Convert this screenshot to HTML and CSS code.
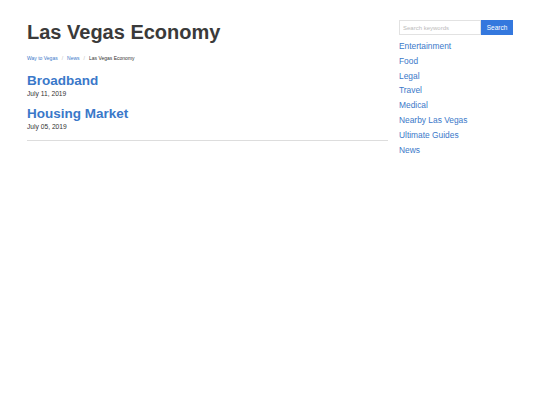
FILE: index.html
```html
<!DOCTYPE html>
<html>
<head>
<meta charset="utf-8">
<link rel="stylesheet" href="styles.css">
</head>
<body>
<div class="page">
  <main class="main">
    <h1 class="title">Las Vegas Economy</h1>
    <nav class="crumbs">
      <a href="#">Way to Vegas</a><span class="sep">/</span><a href="#">News</a><span class="sep">/</span><span class="current">Las Vegas Economy</span>
    </nav>
    <article class="post">
      <h2 class="post-title"><a href="#">Broadband</a></h2>
      <div class="post-date">July 11, 2019</div>
    </article>
    <article class="post">
      <h2 class="post-title"><a href="#">Housing Market</a></h2>
      <div class="post-date">July 05, 2019</div>
    </article>
    <hr class="rule">
  </main>
  <aside class="side">
    <form class="search">
      <input class="search-input" type="text" placeholder="Search keywords">
      <button class="search-btn" type="button">Search</button>
    </form>
    <ul class="cats">
      <li><a href="#">Entertainment</a></li>
      <li><a href="#">Food</a></li>
      <li><a href="#">Legal</a></li>
      <li><a href="#">Travel</a></li>
      <li><a href="#">Medical</a></li>
      <li><a href="#">Nearby Las Vegas</a></li>
      <li><a href="#">Ultimate Guides</a></li>
      <li><a href="#">News</a></li>
    </ul>
  </aside>
</div>
</body>
</html>
```

FILE: styles.css
```css
html, body {
  margin: 0;
  padding: 0;
  background: #fff;
}
body {
  font-family: "Liberation Sans", Arial, sans-serif;
  color: #333;
}
a { text-decoration: none; color: #3a78c9; }
.page {
  display: flex;
  gap: 11px;
  padding: 0 27px;
}
.main {
  width: 361px;
}
.title {
  margin: 20px 0 0;
  font-size: 20px;
  line-height: 24px;
  font-weight: bold;
  color: #3a3a3a;
}
.crumbs {
  margin-top: 10px;
  font-size: 5px;
  line-height: 8px;
  color: #333;
}
.crumbs a { color: #3a78c9; }
.sep {
  color: #bbb;
  padding: 0 4px;
}
.post { margin-top: 10px; }
.post + .post { margin-top: 6px; }
.post-title {
  margin: 0;
  font-size: 13.5px;
  line-height: 17px;
  font-weight: bold;
}
.post-title a { color: #3a78c9; }
.post-date {
  font-size: 6.7px;
  line-height: 10px;
  color: #333;
}
.rule {
  margin: 8px 0 0;
  border: 0;
  border-top: 1px solid #ddd;
}
.side {
  width: 114px;
  padding-top: 20px;
}
.search {
  display: flex;
  margin: 0;
}
.search-input {
  width: 82px;
  height: 15px;
  box-sizing: border-box;
  border: 1px solid #e2e2e2;
  margin: 0;
  padding: 0 3px;
  font-family: inherit;
  font-size: 6px;
  outline: none;
}
.search-input::placeholder { color: #bbb; }
.search-btn {
  width: 32px;
  height: 15px;
  box-sizing: border-box;
  border: 0;
  margin: 0;
  padding: 0;
  background: #3478de;
  color: #fff;
  font-family: inherit;
  font-size: 6.5px;
}
.cats {
  list-style: none;
  margin: 4px 0 0;
  padding: 0;
}
.cats li {
  font-size: 8.4px;
  line-height: 14.8px;
}
.cats a { color: #3a78c9; }
```
